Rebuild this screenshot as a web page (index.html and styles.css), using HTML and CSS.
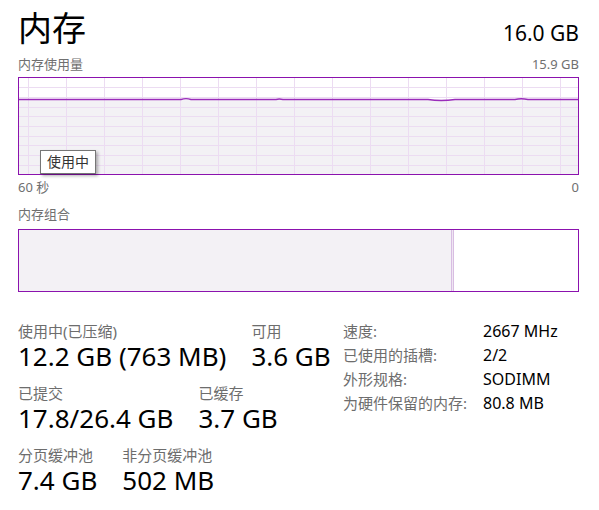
FILE: index.html
```html
<!DOCTYPE html>
<html lang="zh-CN">
<head>
    <meta charset="UTF-8">
    <title>内存</title>
    <link rel="stylesheet" href="styles.css">
</head>
<body>
    <div class="page">
        <div class="head">
            <h1>内存</h1>
            <div class="total">16.0 GB</div>
        </div>

        <div class="axis top-axis">
            <span>内存使用量</span>
            <span>15.9 GB</span>
        </div>

        <div class="chart">
            <svg viewBox="0 0 559 96" preserveAspectRatio="none">
                <path class="fill" d="M0,21 L162,21 C165,20 169,20 172,21 L257,21 Q260,20 264,21 L409,21 Q422,23 436,21 L496,21 Q502,19.5 509,21 L559,21 L559,96 L0,96 Z"/>
                <g class="grid">
                    <line x1="0" y1="9.5" x2="559" y2="9.5"/>
                    <line x1="0" y1="19.5" x2="559" y2="19.5"/>
                    <line x1="0" y1="29.5" x2="559" y2="29.5"/>
                    <line x1="0" y1="38.5" x2="559" y2="38.5"/>
                    <line x1="0" y1="48.5" x2="559" y2="48.5"/>
                    <line x1="0" y1="58.5" x2="559" y2="58.5"/>
                    <line x1="0" y1="67.5" x2="559" y2="67.5"/>
                    <line x1="0" y1="77.5" x2="559" y2="77.5"/>
                    <line x1="0" y1="87.5" x2="559" y2="87.5"/>
                    <line x1="9.5" y1="0" x2="9.5" y2="96"/>
                    <line x1="47.5" y1="0" x2="47.5" y2="96"/>
                    <line x1="85.5" y1="0" x2="85.5" y2="96"/>
                    <line x1="123.5" y1="0" x2="123.5" y2="96"/>
                    <line x1="161.5" y1="0" x2="161.5" y2="96"/>
                    <line x1="199.5" y1="0" x2="199.5" y2="96"/>
                    <line x1="237.5" y1="0" x2="237.5" y2="96"/>
                    <line x1="275.5" y1="0" x2="275.5" y2="96"/>
                    <line x1="313.5" y1="0" x2="313.5" y2="96"/>
                    <line x1="351.5" y1="0" x2="351.5" y2="96"/>
                    <line x1="389.5" y1="0" x2="389.5" y2="96"/>
                    <line x1="427.5" y1="0" x2="427.5" y2="96"/>
                    <line x1="465.5" y1="0" x2="465.5" y2="96"/>
                    <line x1="503.5" y1="0" x2="503.5" y2="96"/>
                    <line x1="541.5" y1="0" x2="541.5" y2="96"/>
                </g>
                <path class="usage" d="M0,21.5 L162,21.5 C165,20.5 169,20.5 172,21.5 L257,21.5 Q260,20.5 264,21.5 L409,21.5 Q422,23.5 436,21.5 L496,21.5 Q502,20 509,21.5 L559,21.5"/>
            </svg>
            <div class="tip">使用中</div>
        </div>

        <div class="axis">
            <span>60 秒</span>
            <span>0</span>
        </div>

        <div class="caption">内存组合</div>

        <div class="compo">
            <div class="in-use" style="width: 77.3%"></div>
            <div class="modified"></div>
            <div class="free"></div>
        </div>

        <div class="stats">
            <div class="stats-left">
                <div class="stat-row">
                    <div class="stat">
                        <div class="label">使用中(已压缩)</div>
                        <div class="value">12.2 GB (763 MB)</div>
                    </div>
                    <div class="stat">
                        <div class="label">可用</div>
                        <div class="value">3.6 GB</div>
                    </div>
                </div>
                <div class="stat-row">
                    <div class="stat">
                        <div class="label">已提交</div>
                        <div class="value">17.8/26.4 GB</div>
                    </div>
                    <div class="stat">
                        <div class="label">已缓存</div>
                        <div class="value">3.7 GB</div>
                    </div>
                </div>
                <div class="stat-row">
                    <div class="stat">
                        <div class="label">分页缓冲池</div>
                        <div class="value">7.4 GB</div>
                    </div>
                    <div class="stat">
                        <div class="label">非分页缓冲池</div>
                        <div class="value">502 MB</div>
                    </div>
                </div>
            </div>

            <dl class="details">
                <dt>速度:</dt>
                <dd>2667 MHz</dd>
                <dt>已使用的插槽:</dt>
                <dd>2/2</dd>
                <dt>外形规格:</dt>
                <dd>SODIMM</dd>
                <dt>为硬件保留的内存:</dt>
                <dd>80.8 MB</dd>
            </dl>
        </div>
    </div>
</body>
</html>
```

FILE: styles.css
```css
body {
    margin: 0;
    background: #fff;
    font-family: "Noto Sans", "Noto Sans CJK SC", sans-serif;
    color: #000;
}
.page {
    padding: 8px 20px 0 18px;
}
.head {
    display: flex;
    justify-content: space-between;
    align-items: baseline;
    line-height: 40px;
}
h1 {
    margin: 0;
    font-size: 34px;
    font-weight: normal;
}
.total {
    font-size: 21px;
}
.axis {
    display: flex;
    justify-content: space-between;
    font-size: 13px;
    line-height: 16px;
    color: #707070;
    margin-top: 4px;
}
.top-axis {
    margin-top: 3px;
    margin-bottom: 5px;
}
.chart {
    position: relative;
    border: 1px solid #8b12ae;
    height: 96px;
}
.chart svg {
    display: block;
    width: 100%;
    height: 96px;
}
.fill {
    fill: #f3f1f5;
}
.grid line {
    stroke: #ecdcf2;
    stroke-width: 1;
}
.usage {
    fill: none;
    stroke: #9a2cba;
    stroke-width: 1.4;
}
.tip {
    position: absolute;
    left: 21px;
    top: 72px;
    padding: 0 6px;
    font-size: 14px;
    line-height: 22px;
    color: #333;
    background: #fff;
    border: 1px solid #767676;
    box-shadow: 2px 2px 3px rgba(0, 0, 0, 0.3);
}
.caption {
    font-size: 13px;
    line-height: 16px;
    color: #707070;
    margin-top: 11px;
}
.compo {
    display: flex;
    margin-top: 7px;
    height: 61px;
    border: 1px solid #8b12ae;
}
.in-use {
    background: #f3f1f5;
}
.modified {
    width: 1px;
    background: #efe6f2;
    border-left: 1px solid #d8bde2;
    border-right: 1px solid #d8bde2;
}
.free {
    flex: 1;
    background: #fff;
}
.stats {
    display: flex;
    align-items: flex-start;
    margin-top: 27px;
}
.stats-left {
    flex: 1;
    padding-top: 2px;
}
.stat-row {
    display: flex;
    gap: 25px;
    margin-bottom: 12px;
}
.label {
    font-size: 15px;
    line-height: 20px;
    color: #6d6d6d;
}
.value {
    font-size: 26px;
    line-height: 30px;
}
.details {
    width: 236px;
    margin: 0;
    display: grid;
    grid-template-columns: 140px 1fr;
    grid-auto-rows: 24px;
    font-size: 15px;
    line-height: 24px;
}
.details dt {
    color: #6d6d6d;
}
.details dd {
    margin: 0;
    font-size: 16px;
}
```
